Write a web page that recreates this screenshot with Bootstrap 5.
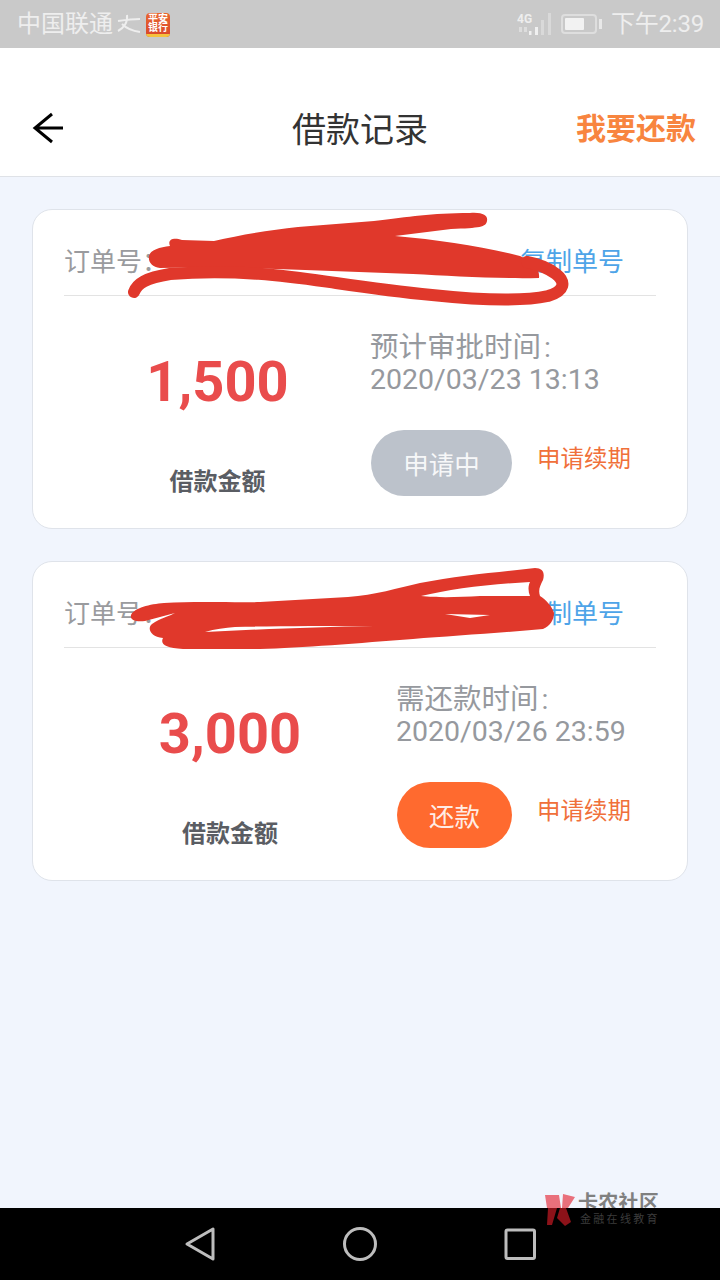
<!DOCTYPE html>
<html lang="zh-CN">
<head>
<meta charset="utf-8">
<title>借款记录</title>
<link href="https://cdn.jsdelivr.net/npm/bootstrap@5.3.0/dist/css/bootstrap.min.css" rel="stylesheet">
<style>
html,body{height:100%;}
body{width:720px;height:1280px;overflow:hidden;background:#f1f5fd;font-family:Roboto,"Noto Sans CJK SC",sans-serif;position:relative;}
.shot{height:1280px;}
.status-strip{height:48px;background:#c9c9c9;color:#eee;font-size:24px;line-height:1;padding:0 16px 0 17px;}
.app-logo{width:24px;height:24px;border-radius:4px;background:linear-gradient(#e9672f,#d8452a);color:#fff;font-size:10px;line-height:9px;font-weight:700;text-align:center;padding-top:1px;margin-left:5px;margin-top:2px;position:relative;overflow:hidden;}
.app-logo::after{content:"";position:absolute;left:0;right:0;bottom:0;height:3px;background:#f5c23e;}
.clock-txt{letter-spacing:-.2px;}
.head-bar{height:129px;background:#fff;border-bottom:1px solid #dfe2e7;padding:55px 24px 0 32px;}
.head-title{font-size:34px;color:#333;line-height:48px;position:absolute;left:0;right:0;top:106px;text-align:center;}
.head-act{font-size:30px;font-weight:700;color:#f8853f;line-height:52px;}
.list-area{padding:32px 32px 0;gap:32px;}
.rec-card{height:320px;background:#fff;border:1px solid #dfe3ea;border-radius:20px;padding:0 31px;position:relative;}
.rec-top{height:86px;border-bottom:1px solid #e3e3e3;padding-top:33px;padding-right:32px;font-size:26px;line-height:38px;color:#9a9b9e;}
.copy-link{color:#4ea4e8;}
.rec-body{position:relative;}
.amt-col{width:var(--w);text-align:center;}
.amt-num{font-size:56px;font-weight:700;color:#e94c4c;line-height:60px;margin-top:56px;}
.amt-lbl{font-size:24px;font-weight:700;color:#5a5d63;line-height:34px;margin-top:53px;}
.info-col{padding-top:36px;color:#96999e;font-size:28.500px;line-height:32px;white-space:nowrap;}
.info-line{margin-left:-1px;}
.info-cap{word-spacing:-4px;}
.action-row{margin-top:34px;gap:26px;}
.pill-act{width:141px;height:66px;border-radius:33px;color:rgba(255,255,255,.9);font-size:25.500px;line-height:70px;text-align:center;}
.pill-grey{background:#bcc2cb;}
.pill-orange{background:#ff6a2f;width:115px;margin-left:1px;}
.renew-link{color:#f0703a;font-size:23.500px;line-height:34px;margin-top:12px;margin-left:-1px;}
.scribble{position:absolute;left:0;top:0;pointer-events:none;}
.wm-text{position:absolute;left:578px;top:1194px;font-size:20px;font-weight:700;color:#808080;line-height:19px;letter-spacing:.3px;}
.wm-sub{position:absolute;left:580px;top:1213px;font-size:11px;color:#3c3c3c;line-height:14px;letter-spacing:2.300px;}
.nav-strip{position:absolute;left:0;right:0;bottom:0;height:72px;background:#000;}
</style>
</head>
<body>
<div class="shot d-flex flex-column">
  <div class="status-strip d-flex align-items-center justify-content-between">
    <div class="d-flex align-items-center">
      <span>中国联通</span>
      <svg width="24" height="20" viewBox="0 0 24 20" class="ms-1"><path d="M1 7C8 6 16 5 23 5M10 1C11 8 7 14 1 17M5 10C9 14 16 17 23 18" fill="none" stroke="#eee" stroke-width="2"/></svg>
      <div class="app-logo">平安<br>银行</div>
    </div>
    <div class="d-flex align-items-center">
      <svg width="36" height="24" viewBox="0 0 36 24" class="me-2"><text x="0" y="11" font-size="12" font-weight="700" fill="#eee" font-family="Roboto">4G</text><g fill="#ddd"><rect x="2" y="15" width="3" height="5"/><rect x="7" y="15" width="3" height="5"/></g><g fill="#f0f0f0"><rect x="12" y="19" width="2.500" height="4"/><rect x="18" y="15" width="3" height="8"/></g><g fill="#d9d9d9"><rect x="24" y="8" width="3" height="15"/><rect x="31" y="1" width="3" height="22"/></g></svg>
      <svg width="42" height="22" viewBox="0 0 42 22" class="me-2"><rect x="1" y="2" width="34" height="18" rx="3" fill="none" stroke="#dedede" stroke-width="2"/><rect x="4" y="5" width="19" height="12" rx="1" fill="#f2f2f2"/><rect x="38" y="6" width="3" height="10" fill="#e8e8e8"/></svg>
      <span class="clock-txt">下午2:39</span>
    </div>
  </div>
  <div class="head-bar d-flex justify-content-between">
    <svg width="32" height="50" viewBox="0 0 32 50"><path d="M31 25H3M20 11L3 25L20 39" fill="none" stroke="#000" stroke-width="3"/></svg>
    <div class="head-act">我要还款</div>
  </div>
  <div class="head-title">借款记录</div>
  <div class="list-area d-flex flex-column">
    <div class="rec-card">
      <div class="rec-top d-flex justify-content-between"><span>订单号：</span><span class="copy-link">复制单号</span></div>
      <div class="d-flex rec-body">
        <div class="amt-col" style="--w:307px"><div class="amt-num">1,500</div><div class="amt-lbl">借款金额</div></div>
        <div class="info-col">
          <div class="info-line info-cap">预计审批时间 :</div><div class="info-line">2020/03/23 13:13</div>
          <div class="d-flex action-row"><div class="pill-act pill-grey">申请中</div><div class="renew-link">申请续期</div></div>
        </div>
      </div>
    </div>
    <div class="rec-card">
      <div class="rec-top d-flex justify-content-between"><span>订单号：</span><span class="copy-link">复制单号</span></div>
      <div class="d-flex rec-body">
        <div class="amt-col" style="--w:332px"><div class="amt-num">3,000</div><div class="amt-lbl">借款金额</div></div>
        <div class="info-col">
          <div class="info-cap">需还款时间 :</div><div>2020/03/26 23:59</div>
          <div class="d-flex action-row"><div class="pill-act pill-orange">还款</div><div class="renew-link">申请续期</div></div>
        </div>
      </div>
    </div>
  </div>
</div>
<svg class="scribble" width="720" height="1280" viewBox="0 0 720 1280" fill="#e0382b" stroke="none">
  <path d="M149 256C150 250 160 247 170 246C167 239 174 237 182 240L214 241C240 235 270 230 298 227L374 221C410 217 430 213 470 213C484 212 488 216 487 221C486 227 480 228 451 229L395 236C440 240 480 246 520 256C535 262 540 270 539 278C500 279 450 276 413 274L305 270L221 267L160 268C152 267 148 262 149 256Z"/>
  <path d="M134 292C137 284 145 278 170 274C240 268 300 278 336 283C370 288 400 292 432 295C470 299 520 302 548 296C565 291 566 282 556 274C548 268 538 264 527 262" fill="none" stroke="#e0382b" stroke-width="12" stroke-linecap="round" stroke-linejoin="round"/>
  <path d="M131 615C134 608 150 604 164 603C200 601 240 603 260 602L348 597C375 595 398 588 420 583C460 575 500 572 535 568C543 568 545 573 543 580C540 586 538 590 540 596C546 600 552 606 554 613C554 620 550 626 543 629C500 633 450 636 413 639C360 643 300 648 260 649L183 649C165 648 160 644 163 638C150 637 147 628 152 624C160 618 170 616 175 613L145 621C135 622 130 620 131 615Z"/>
  <path d="M421 596C450 589 490 584 530 582C528 586 528 591 530 596L480 596C460 597 440 598 421 596Z" fill="#fff"/>
  <path d="M445 614L490 615L470 618Z" fill="#fff"/>
  <path d="M205 632C260 629 320 627 374 626C320 626 270 626 235 627C225 628 215 629 205 632Z" fill="#fff"/>
</svg>
<div class="wm-text">卡农社区</div>
<div class="nav-strip d-flex align-items-center">
  <svg width="720" height="72" viewBox="0 0 720 72" fill="none" stroke="#bdbdbd" stroke-width="3" stroke-linejoin="round"><path d="M213 21V51L187 36Z"/><circle cx="360" cy="36" r="15.500"/><rect x="506" y="22" width="28.500" height="28.500" rx="1.500"/></svg>
</div>
<svg class="scribble" width="720" height="1280" viewBox="0 0 720 1280"><path d="M545 1195H559L561 1208H547ZM563 1194L575 1197L568 1208H562Z" fill="#e9707c"/><path d="M548 1208H557L552 1225H547ZM560 1208H566L571 1222L565 1226L557 1218Z" fill="#8c1219"/></svg>
<div class="wm-sub">金融在线教育</div>
</body>
</html>
